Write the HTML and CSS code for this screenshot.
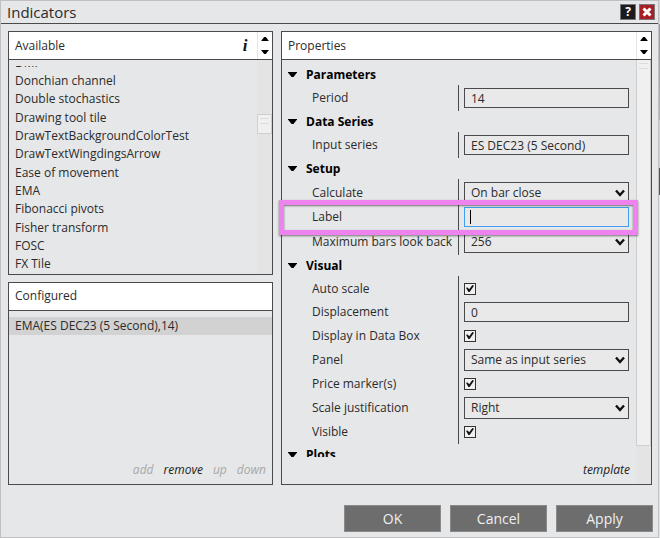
FILE: index.html
```
<!DOCTYPE html>
<html lang="en">
<head>
	<meta charset="utf-8">
	<title>Indicators</title>
	<meta name="viewport" content="width=device-width, initial-scale=1">
	<link rel="stylesheet" href="styles.css">
</head>
<body>
	<svg class="defs" aria-hidden="true">
		<symbol id="chevron" viewBox="0 0 10 8"><path d="M1 1.5 L5 6 L9 1.5" fill="none" stroke="#111" stroke-width="2.4"/></symbol>
		<symbol id="down" viewBox="0 0 9 5"><path d="M0 0 H9 V.6 L5.5 5 H3.5 L0 .6 Z"/></symbol>
		<symbol id="up" viewBox="0 0 9 5"><path d="M0 5 H9 V4.4 L5.5 0 H3.5 L0 4.4 Z"/></symbol>
	</svg>
	<div class="window">
		<div class="titlebar">
			<h1>Indicators</h1>
			<button class="tool help" aria-label="Help">?</button>
			<button class="tool close" aria-label="Close">
				<svg width="10" height="10" viewBox="0 0 10 10"><path d="M1.5 1.5 L8.5 8.5 M8.5 1.5 L1.5 8.5" stroke="#fff" stroke-width="3"/></svg>
			</button>
		</div>

		<div class="content">
			<div class="column">
				<section class="panel available">
					<div class="panel-head">
						<h2>Available</h2>
						<button class="info" aria-label="Info">i</button>
						<div class="spinner">
							<button aria-label="Up"><svg width="8" height="4"><use href="#up"/></svg></button>
							<button aria-label="Down"><svg width="8" height="4"><use href="#down"/></svg></button>
						</div>
					</div>
					<div class="panel-body">
						<div class="list-clip">
							<ul class="list">
								<li>DMI</li>
								<li>Donchian channel</li>
								<li>Double stochastics</li>
								<li>Drawing tool tile</li>
								<li>DrawTextBackgroundColorTest</li>
								<li>DrawTextWingdingsArrow</li>
								<li>Ease of movement</li>
								<li>EMA</li>
								<li>Fibonacci pivots</li>
								<li>Fisher transform</li>
								<li>FOSC</li>
								<li>FX Tile</li>
							</ul>
						</div>
						<div class="track track-available"><div class="thumb"></div></div>
					</div>
				</section>

				<section class="panel configured">
					<div class="panel-head"><h2>Configured</h2></div>
					<ul class="chosen">
						<li class="selected">EMA(ES DEC23 (5 Second),14)</li>
					</ul>
					<div class="links">
						<a class="off" href="#">add</a>
						<a href="#">remove</a>
						<a class="off" href="#">up</a>
						<a class="off" href="#">down</a>
					</div>
				</section>
			</div>

			<section class="panel properties">
				<div class="panel-head">
					<h2>Properties</h2>
					<div class="spinner">
						<button aria-label="Up"><svg width="8" height="4"><use href="#up"/></svg></button>
						<button aria-label="Down"><svg width="8" height="4"><use href="#down"/></svg></button>
					</div>
				</div>
				<div class="panel-body">
					<div class="props-side">
						<form class="props">
							<h3><svg width="9" height="5"><use href="#down"/></svg>Parameters</h3>
							<div class="group">
								<div class="row"><label for="period">Period</label><input id="period" type="text" value="14"></div>
							</div>

							<h3><svg width="9" height="5"><use href="#down"/></svg>Data Series</h3>
							<div class="group">
								<div class="row"><label for="series">Input series</label><input id="series" type="text" value="ES DEC23 (5 Second)"></div>
							</div>

							<h3><svg width="9" height="5"><use href="#down"/></svg>Setup</h3>
							<div class="group">
								<div class="row row-select">
									<label for="calculate">Calculate</label>
									<div class="select"><select id="calculate"><option>On bar close</option></select><svg width="10" height="8"><use href="#chevron"/></svg></div>
								</div>
								<div class="row">
									<label for="label">Label</label>
									<div class="edit"><input id="label" type="text"><span class="caret"></span></div>
								</div>
								<div class="row row-select">
									<label for="lookback">Maximum bars look back</label>
									<div class="select"><select id="lookback"><option>256</option></select><svg width="10" height="8"><use href="#chevron"/></svg></div>
								</div>
							</div>

							<h3><svg width="9" height="5"><use href="#down"/></svg>Visual</h3>
							<div class="group">
								<div class="row row-check"><label for="autoscale">Auto scale</label><input id="autoscale" type="checkbox" checked></div>
								<div class="row"><label for="displacement">Displacement</label><input id="displacement" type="text" value="0"></div>
								<div class="row row-check"><label for="databox">Display in Data Box</label><input id="databox" type="checkbox" checked></div>
								<div class="row row-select">
									<label for="panel">Panel</label>
									<div class="select"><select id="panel"><option>Same as input series</option></select><svg width="10" height="8"><use href="#chevron"/></svg></div>
								</div>
								<div class="row row-check"><label for="marker">Price marker(s)</label><input id="marker" type="checkbox" checked></div>
								<div class="row row-select">
									<label for="scale">Scale justification</label>
									<div class="select"><select id="scale"><option>Right</option></select><svg width="10" height="8"><use href="#chevron"/></svg></div>
								</div>
								<div class="row row-check"><label for="visible">Visible</label><input id="visible" type="checkbox" checked></div>
							</div>

							<h3><svg width="9" height="5"><use href="#down"/></svg>Plots</h3>
						</form>
						<div class="links"><a href="#">template</a></div>
					</div>
					<div class="track track-props"><div class="thumb"></div></div>
				</div>
				<div class="highlight"></div>
			</section>
		</div>

		<div class="actions">
			<button>OK</button>
			<button>Cancel</button>
			<button>Apply</button>
		</div>
	</div>
</body>
</html>
```
FILE: styles.css
```
* {
	box-sizing: border-box;
}
body {
	margin: 0;
	padding-right: 1px;
	font-family: "Open Sans", "Noto Sans", sans-serif;
	font-size: 12px;
	line-height: 18px;
	color: #2b2b2b;
	/* edge of the chart behind the window */
	background: linear-gradient(#d4d4d6 24px, #9a9a9e 24px, #b4b4b6 120px, #d0d0d2 120px, #d0d0d2 168px, #555 168px, #555 195px, #e6e7e8 195px);
}
h1, h2, h3, ul {
	margin: 0;
	padding: 0;
	list-style: none;
}
button, input, select {
	font: inherit;
	color: inherit;
	margin: 0;
	padding: 0;
}
.defs {
	position: absolute;
	width: 0;
	height: 0;
}
.window {
	display: flex;
	flex-direction: column;
	height: 100vh;
	border: 1px solid #c0c0c2;
	background-color: #e6e7e8;
}

/* title bar */
.titlebar {
	display: flex;
	align-items: center;
	gap: 3px;
	height: 23px;
	padding: 0 3px 0 6px;
	border-bottom: 1px solid #4a4a4c;
}
.titlebar h1 {
	flex: 1;
	font-size: 15px;
	font-weight: normal;
}
.tool {
	display: flex;
	align-items: center;
	justify-content: center;
	width: 16px;
	height: 16px;
	border: 1px solid #77777a;
	color: #fff;
	font-weight: bold;
	line-height: 14px;
}
.help {
	background-color: #1c1a1c;
}
.close {
	background-color: #a81e24;
}

/* panels */
.content {
	flex: 1;
	min-height: 0;
	display: grid;
	grid-template-columns: 5fr 7fr;
	grid-template-rows: minmax(0, 1fr);
	gap: 8px;
	padding: 7px 6px 0 7px;
}
.column {
	display: flex;
	flex-direction: column;
	gap: 7px;
}
.panel {
	display: flex;
	flex-direction: column;
	border: 1px solid #4a4a4c;
	min-height: 0;
}
.available {
	flex: 6;
}
.configured {
	flex: 5;
}
.properties {
	position: relative;
}
.panel-head {
	display: flex;
	align-items: center;
	flex: none;
	height: 28px;
	padding-left: 6px;
	background-color: #fff;
	border-bottom: 1px solid #4a4a4c;
}
.panel-head h2 {
	flex: 1;
	font-size: 12px;
	font-weight: normal;
}
.info {
	width: 24px;
	border: none;
	background: none;
	font-family: "Liberation Serif", serif;
	font-size: 17px;
	font-weight: bold;
	font-style: italic;
	color: #111;
}
.spinner {
	display: flex;
	flex-direction: column;
	justify-content: space-between;
	align-self: stretch;
	width: 15px;
	padding: 5px 0;
	border-left: 1px solid #e4e4e4;
}
.spinner button {
	display: flex;
	justify-content: center;
	border: none;
	background: none;
}
.panel-body {
	flex: 1;
	min-height: 0;
	display: flex;
}

/* available list */
.list-clip {
	flex: 1;
	margin: 6px 0;
	overflow: hidden;
}
.list {
	display: grid;
	grid-auto-rows: 18px 18px 19px;
	margin-top: -12px;
	padding-left: 6px;
}
.chosen {
	flex: 1;
	padding-top: 6px;
}
.selected {
	padding-left: 6px;
	background-color: #d2d2d2;
}
.track {
	flex: none;
	display: flex;
	flex-direction: column;
	width: 15px;
	background-color: #e4e4e4;
}
.thumb {
	border: 1px solid #cfcfcf;
	background-color: #f0f0f0;
}
.thumb::before {
	content: "";
	display: block;
	height: 4px;
	margin: 3px 2px;
	border: solid #dcdcdc;
	border-width: 1px 0;
}
.track-available {
	padding-top: 54px;
}
.track-available .thumb {
	height: 20px;
}
.track-props .thumb {
	flex: 1;
	margin-bottom: 38px;
	border-top: none;
}

.links {
	display: flex;
	justify-content: flex-end;
	gap: 10px;
	height: 27px;
	padding: 4px 6px 0 0;
	font-style: italic;
}
.links a {
	color: #222;
	text-decoration: none;
}
.links .off {
	color: #a8a8a8;
}

/* properties */
.props-side {
	flex: 1;
	min-height: 0;
	display: flex;
	flex-direction: column;
}
.props {
	flex: 1;
	min-height: 0;
	padding-top: 4px;
	overflow: hidden;
}
.props h3 {
	display: flex;
	align-items: center;
	gap: 9px;
	height: 21px;
	padding-left: 6px;
	font-size: 12px;
	color: #000;
}
.group {
	position: relative;
	padding: 1px 7px 1px 30px;
}
.group::before {
	content: "";
	position: absolute;
	top: 0;
	bottom: 0;
	left: 176px;
	border-left: 1px solid #4a4a4c;
}
.row {
	display: grid;
	grid-template-columns: 152px 1fr;
	align-items: center;
	height: 24px;
}
.row-select {
	height: 25px;
}
.row-check {
	height: 23px;
}
.row input[type="text"], .row select {
	appearance: none;
	display: block;
	width: 100%;
	height: 20px;
	padding: 0 6px;
	border: 1px solid #4a4a4c;
	border-radius: 0;
	background-color: #e8e9e8;
	outline: none;
}
.row select {
	height: 22px;
}
.edit, .select {
	position: relative;
}
.row .edit input[type="text"] {
	border-color: #3f9fee;
}
.select svg {
	position: absolute;
	top: 7px;
	right: 4px;
	pointer-events: none;
}
.caret {
	position: absolute;
	top: 3px;
	left: 6px;
	width: 1px;
	height: 14px;
	background-color: #000;
}
.row input[type="checkbox"] {
	appearance: none;
	display: grid;
	place-items: center;
	width: 12px;
	height: 12px;
	border: 1px solid #333;
	background-color: #f0f0f0;
}
.row input[type="checkbox"]::before {
	content: "";
	width: 8px;
	height: 7px;
	background-color: #111;
	clip-path: polygon(0 40%, 20% 35%, 40% 60%, 80% 0, 100% 10%, 45% 100%, 30% 100%);
}
/* marks the label row */
.highlight {
	position: absolute;
	top: 168px;
	left: -3px;
	right: 13px;
	height: 35px;
	border: 5px solid #ee82ee;
	box-shadow: 0 1px 2px rgba(0,0,0,.5), inset 0 1px 2px rgba(0,0,0,.5);
	pointer-events: none;
}

/* bottom buttons */
.actions {
	display: flex;
	justify-content: flex-end;
	gap: 9px;
	padding: 20px 5px 5px;
}
.actions button {
	width: 97px;
	height: 27px;
	border: 1px solid #8a8a8a;
	background-color: #6d6d6d;
	color: #f0f0f0;
	font-size: 14px;
}
```
